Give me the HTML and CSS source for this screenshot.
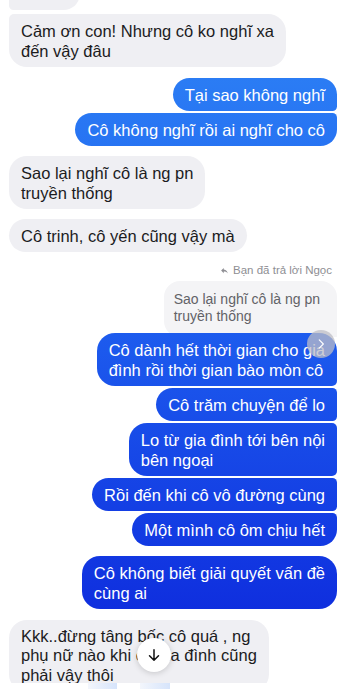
FILE: index.html
```html
<!DOCTYPE html>
<html lang="vi">
<head>
  <meta charset="UTF-8" />
  <meta name="viewport" content="width=device-width, initial-scale=1.0"/>
  <title>Tin nhắn</title>
  <link rel="stylesheet" href="styles.css">
</head>
<body>

<div class="chat">
  <div class="msg in partial">&nbsp;</div>
  <div class="msg in join-top">Cảm ơn con! Nhưng cô ko nghĩ xa<br>đến vậy đâu</div>

  <div class="msg out first gap-l">Tại sao không nghĩ</div>
  <div class="msg out last">Cô không nghĩ rồi ai nghĩ cho cô</div>

  <div class="msg in gap-m">Sao lại nghĩ cô là ng pn<br>truyền thống</div>
  <div class="msg in gap-m">Cô trinh, cô yến cũng vậy mà</div>

  <div class="reply-label gap-l">
    <svg viewBox="0 0 24 24" width="9" height="9"><path d="M10 9V5l-7 7 7 7v-4.1c5 0 8.5 1.6 11 5.1-1-5-4-10-11-11z" fill="#8e8e93"/></svg>
    Bạn đã trả lời Ngọc
  </div>
  <div class="quote">Sao lại nghĩ cô là ng pn<br>truyền thống</div>
  <div class="msg out first with-more">Cô dành hết thời gian cho gia<br>đình rồi thời gian bào mòn cô
    <span class="more"><svg viewBox="0 0 24 24" width="14" height="14"><path d="M9 5l7 7-7 7" fill="none" stroke="#fff" stroke-width="2" stroke-linecap="round" stroke-linejoin="round"/></svg></span>
  </div>
  <div class="msg out mid">Cô trăm chuyện để lo</div>
  <div class="msg out mid">Lo từ gia đình tới bên nội<br>bên ngoại</div>
  <div class="msg out mid">Rồi đến khi cô vô đường cùng</div>
  <div class="msg out last">Một mình cô ôm chịu hết</div>

  <div class="msg out gap-m">Cô không biết giải quyết vấn đề<br>cùng ai</div>

  <div class="msg in gap-l tall">Kkk..đừng tâng bốc cô quá , ng<br>phụ nữ nào khi có gia đình cũng<br>phải vậy thôi</div>

  <div class="scroll-down">
    <svg viewBox="0 0 24 24" width="18" height="18"><path d="M12 5v14M6 13l6 6 6-6" fill="none" stroke="#111" stroke-width="2" stroke-linecap="round" stroke-linejoin="round"/></svg>
  </div>
</div>

<div class="strip">
  <span class="thumb t1"></span>
  <span class="thumb t2"></span>
</div>

</body>
</html>
```

FILE: styles.css
```css
body {
  margin: 0;
  background: #fff;
  font-family: 'Liberation Sans', Arial, sans-serif;
  color: #1c1c1e;
  width: 340px;
  overflow: hidden;
}

.chat {
  position: relative;
  height: 683px;
  overflow: hidden;
  display: flex;
  flex-direction: column;
  padding: 0 3px 0 9px;
}

.msg {
  font-size: 16.5px;
  line-height: 20px;
  padding: 6.5px 12px;
  border-radius: 18px;
  margin-top: 2px;
  white-space: nowrap;
  flex-shrink: 0;
}

.msg.tall {
  line-height: 19.5px;
}

.msg.in {
  align-self: flex-start;
  background: #efeff3;
}

.msg.out {
  align-self: flex-end;
  color: #fff;
  background: linear-gradient(to bottom, #2f86f6 0px, #1d5cee 330px, #0b22da 689px);
  background-attachment: fixed;
}

.msg.partial {
  width: 47px;
  margin-top: -23px;
  border-bottom-left-radius: 5px;
}

.msg.join-top {
  margin-top: 4px;
  border-top-left-radius: 5px;
}

.msg.out.first { border-bottom-right-radius: 5px; }
.msg.out.mid { border-top-right-radius: 5px; border-bottom-right-radius: 5px; }
.msg.out.last { border-top-right-radius: 5px; }

.gap-m { margin-top: 10px; }
.gap-l { margin-top: 11px; }

.reply-label {
  align-self: flex-end;
  font-size: 11.5px;
  line-height: 15px;
  color: #8e8e93;
  padding-right: 5px;
  display: flex;
  align-items: center;
  gap: 4px;
}

.quote {
  align-self: flex-end;
  margin-top: 3px;
  margin-bottom: -6px;
  background: #f4f4f6;
  color: #626267;
  font-size: 14px;
  line-height: 17px;
  padding: 9.5px 17px 12.5px 10px;
  border-radius: 16px 16px 0 16px;
  white-space: nowrap;
}

.with-more {
  position: relative;
}

.more {
  position: absolute;
  top: -3px;
  right: 2px;
  width: 28px;
  height: 28px;
  border-radius: 50%;
  background: rgba(190, 190, 198, 0.75);
  display: flex;
  align-items: center;
  justify-content: center;
}

.scroll-down {
  position: absolute;
  left: 137px;
  top: 638px;
  width: 34px;
  height: 34px;
  border-radius: 50%;
  background: #fff;
  box-shadow: 0 1px 6px rgba(0, 0, 0, 0.18);
  display: flex;
  align-items: center;
  justify-content: center;
}

.strip {
  height: 6px;
  position: relative;
  background: #fff;
}

.thumb {
  position: absolute;
  top: 0;
  height: 6px;
  background: linear-gradient(to right, #f3f6fc, #d6e4fb);
}

.t1 { left: 88px; width: 29px; }
.t2 { left: 140px; width: 30px; }
```
